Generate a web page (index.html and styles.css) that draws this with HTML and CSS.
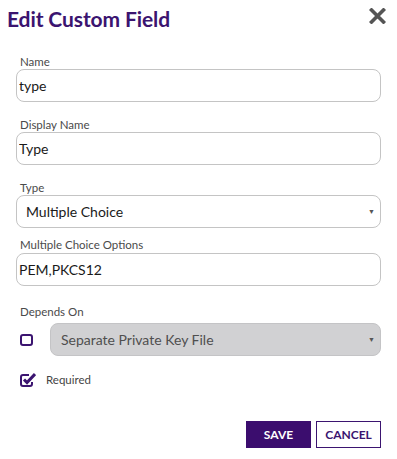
FILE: index.html
```html
<!DOCTYPE html>
<html lang="en">
<head>
  <meta charset="UTF-8" />
  <meta name="viewport" content="width=device-width, initial-scale=1.0" />
  <title>Edit Custom Field</title>
  <link rel="stylesheet" href="styles.css">
</head>
<body>
  <div class="modal">
    <div class="modal-header">
      <h1>Edit Custom Field</h1>
      <button class="close-btn" aria-label="Close">
        <svg width="17" height="16" viewBox="0 0 17 16">
          <path d="M2.5 2 L14.5 14 M14.5 2 L2.5 14" stroke="#555" stroke-width="3.6" stroke-linecap="square" />
        </svg>
      </button>
    </div>

    <form class="modal-body">
      <div class="field">
        <label for="nameInput">Name</label>
        <input type="text" id="nameInput" value="type" />
      </div>

      <div class="field">
        <label for="displayNameInput">Display Name</label>
        <input type="text" id="displayNameInput" value="Type" />
      </div>

      <div class="field">
        <label for="typeSelect">Type</label>
        <div class="select-wrap">
          <select id="typeSelect">
            <option>Multiple Choice</option>
          </select>
        </div>
      </div>

      <div class="field field-options">
        <label for="optionsInput">Multiple Choice Options</label>
        <input type="text" id="optionsInput" value="PEM,PKCS12" />
      </div>

      <div class="field field-depends">
        <label>Depends On</label>
        <div class="depends-row">
          <span class="checkbox">
            <svg width="13" height="12" viewBox="0 0 13 12">
              <rect x="1" y="1" width="11" height="10" rx="2" fill="none" stroke="#3b1470" stroke-width="2" />
            </svg>
          </span>
          <div class="select-wrap disabled">
            <div class="fake-select" aria-disabled="true">Separate Private Key File</div>
          </div>
        </div>
      </div>

      <div class="required-row">
        <span class="checkbox">
          <svg width="16" height="15" viewBox="0 0 16 15">
            <path d="M9 3 H3 a2 2 0 0 0 -2 2 V12 a2 2 0 0 0 2 2 H10 a2 2 0 0 0 2 -2 V10" fill="none" stroke="#3b1470" stroke-width="2" />
            <path d="M4 7.5 L7 10.5 L15 2" fill="none" stroke="#3b1470" stroke-width="3" />
          </svg>
        </span>
        <span class="required-text">Required</span>
      </div>

      <div class="actions">
        <button type="button" class="btn btn-save">SAVE</button>
        <button type="button" class="btn btn-cancel">CANCEL</button>
      </div>
    </form>
  </div>
</body>
</html>
```

FILE: styles.css
```css
* {
  box-sizing: border-box;
}

body {
  margin: 0;
  background: #fff;
  font-family: Lato, "Open Sans", Arial, sans-serif;
  color: #222;
}

.modal {
  width: 397px;
  height: 459px;
}

.modal-header {
  display: flex;
  justify-content: space-between;
  align-items: center;
  padding: 4px 11px 0 7px;
  height: 32px;
}

.modal-header h1 {
  margin: 0;
  font-size: 21px;
  font-weight: 700;
  color: #3b1470;
  letter-spacing: -0.1px;
}

.close-btn {
  border: none;
  background: none;
  padding: 0;
  margin-top: -4px;
  cursor: pointer;
  display: flex;
}

.modal-body {
  padding: 23px 16px 0 16px;
}

.field {
  margin-bottom: 16px;
}

.field label {
  display: block;
  font-size: 11.5px;
  color: #4a4a4a;
  height: 14px;
  line-height: 14px;
  padding-left: 4px;
}

.field input[type="text"],
.field select {
  width: 100%;
  height: 33px;
  border: 1px solid #c4c4c4;
  border-radius: 8px;
  font-family: inherit;
  font-size: 14px;
  color: #1a1a1a;
  background: #fff;
  outline: none;
}

.field input[type="text"] {
  padding: 0 2px;
}

.select-wrap {
  position: relative;
}

.select-wrap select {
  appearance: none;
  -webkit-appearance: none;
  padding: 0 20px 0 9px;
}

.select-wrap::after {
  content: '▼';
  position: absolute;
  right: 6px;
  top: 12px;
  font-size: 7px;
  color: #555;
  pointer-events: none;
}

.field-options {
  margin-top: -6px;
  margin-bottom: 19px;
}

.field-options label {
  margin-bottom: 1px;
}

.depends-row {
  display: flex;
  align-items: center;
  margin-top: 4px;
}

.depends-row .checkbox {
  width: 34px;
  padding-left: 4px;
  display: flex;
}

.depends-row .select-wrap {
  flex: 1;
}

.fake-select {
  height: 33px;
  line-height: 31px;
  border: 1px solid #c4c4c6;
  border-radius: 8px;
  background: #d1d1d3;
  color: #4f4f4f;
  font-size: 14px;
  padding-left: 10px;
  cursor: not-allowed;
}

.required-row {
  display: flex;
  align-items: center;
  margin-top: 1px;
  padding-left: 4px;
}

.required-row .checkbox {
  display: flex;
  width: 26px;
}

.required-text {
  font-size: 11.5px;
  color: #444;
}

.actions {
  display: flex;
  justify-content: flex-end;
  gap: 5px;
  margin-top: 34px;
}

.btn {
  height: 27px;
  width: 65px;
  font-family: inherit;
  font-size: 12px;
  font-weight: 700;
  cursor: pointer;
  border-radius: 0;
}

.btn-save {
  background: #3b0d6e;
  color: #fff;
  border: none;
}

.btn-cancel {
  background: #fff;
  color: #3b1470;
  border: 1px solid #3b1470;
}
```
